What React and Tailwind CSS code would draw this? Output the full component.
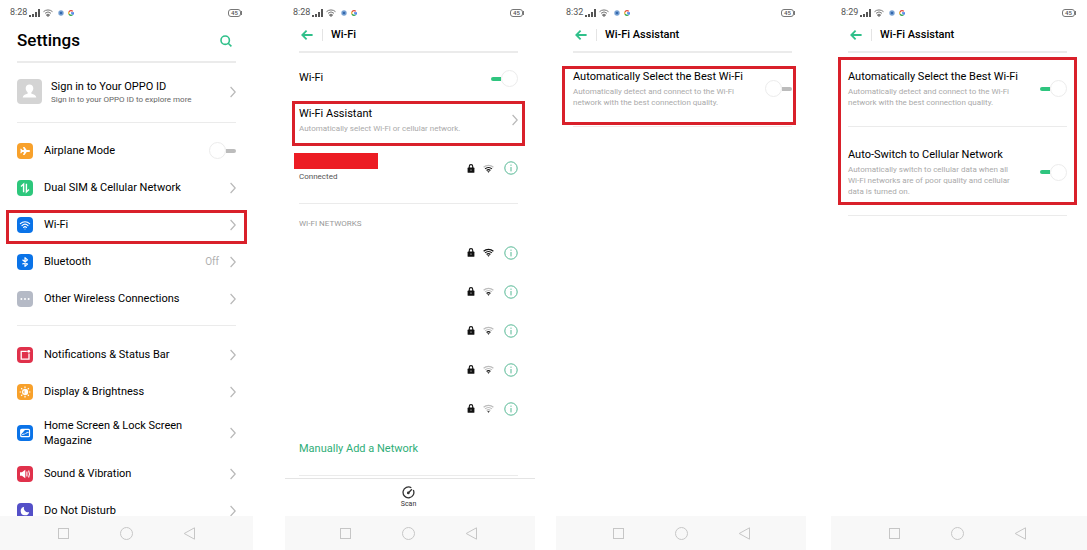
import React from 'react';

const TOP_SETTINGS = [
  { label: 'Airplane Mode', icon: 'plane', color: 'bg-[#f8a12b]', toggle: true },
  { label: 'Dual SIM & Cellular Network', icon: 'sim', color: 'bg-[#2dc77c]' },
  { label: 'Wi-Fi', icon: 'wifi', color: 'bg-[#0a73e8]', marked: true },
  { label: 'Bluetooth', icon: 'bluetooth', color: 'bg-[#0a73e8]', value: 'Off' },
  { label: 'Other Wireless Connections', icon: 'dots', color: 'bg-[#b5bac6]' },
];

const MORE_SETTINGS = [
  { label: 'Notifications & Status Bar', icon: 'notify', color: 'bg-[#e0314b]' },
  { label: 'Display & Brightness', icon: 'sun', color: 'bg-[#f8a12b]' },
  { label: 'Home Screen & Lock Screen Magazine', icon: 'picture', color: 'bg-[#0a73e8]', tall: true },
  { label: 'Sound & Vibration', icon: 'sound', color: 'bg-[#e0314b]' },
  { label: 'Do Not Disturb', icon: 'moon', color: 'bg-[#5450c8]' },
];

// signal level of each network in the list, 4 is full
const NETWORKS = [4, 2, 2, 2, 1];

const GLYPHS = {
  plane: <path d="M13 8c0 .7-.6 1-1.2 1H9.700l-2.200 3H6l1-3H5.200l-.9 1.200h-1L3.700 8l-.4-2.200h1L5.200 7H7L6 4h1.500l2.200 3h2.100c.6 0 1.200.3 1.200 1z" fill="#fff" />,
  sim: (
    <g fill="none" stroke="#fff" strokeWidth="1.4">
      <path d="M4 6.4 6.6 4v8.200M9.400 3.800V12L12 9.600" />
    </g>
  ),
  wifi: (
    <g fill="none" stroke="#fff" strokeWidth="1.2" strokeLinecap="round">
      <path d="M3.4 6.6a6.7 6.7 0 0 1 9.2 0M5 8.6a4.4 4.4 0 0 1 6 0M6.6 10.4a2 2 0 0 1 2.8 0" />
      <circle cx="8" cy="12" r=".5" fill="#fff" stroke="none" />
    </g>
  ),
  bluetooth: <path d="m5.5 5.8 5 4.3L8 12.3V3.7l2.5 2.2-5 4.3" fill="none" stroke="#fff" strokeWidth="1.2" strokeLinejoin="round" />,
  dots: (
    <g fill="#fff">
      <circle cx="4.4" cy="8" r="1" />
      <circle cx="8" cy="8" r="1" />
      <circle cx="11.6" cy="8" r="1" />
    </g>
  ),
  notify: (
    <g>
      <path d="M9.8 4.4H4.2v7.8h7.8V6.4" fill="none" stroke="#fff" strokeWidth="1.3" />
      <circle cx="11.7" cy="4.3" r="1.4" fill="#fff" />
    </g>
  ),
  sun: (
    <g stroke="#fff" strokeWidth="1.2" fill="none">
      <circle cx="8" cy="8" r="2.4" />
      <path d="M8 5.6a2.4 2.4 0 0 1 0 4.8z" fill="#fff" />
      <path d="M8 2.6v1.6M8 11.8v1.6M2.6 8h1.6M11.8 8h1.6M4.2 4.2l1.1 1.1M10.7 10.7l1.1 1.1M4.2 11.8l1.1-1.1M10.7 5.3l1.1-1.1" />
    </g>
  ),
  picture: (
    <g>
      <rect x="3.7" y="4.3" width="8.8" height="7.4" rx="1" fill="none" stroke="#fff" strokeWidth="1.2" />
      <path d="M4 4.5h4L4.6 8.4H4zM4.8 10.2c1.6-2.4 2.6-.4 3.9-1.8 1-1 1.9-1.3 3-.9" fill="#fff" stroke="#fff" strokeWidth=".6" />
    </g>
  ),
  sound: (
    <g>
      <path d="M3 6.3h1.9L8.3 3.8v8.4L4.9 9.7H3z" fill="#fff" />
      <path d="M9.9 5.6v4.8M11.6 4.6c1 2 1 4.8 0 6.8" fill="none" stroke="#fff" strokeWidth="1.1" />
    </g>
  ),
  moon: <path d="M7.2 3.8a3.9 3.9 0 0 0 5 5.1 4.3 4.3 0 1 1-5-5.1z" fill="#fff" />,
};

function Chevron() {
  return (
    <svg className="h-3 w-[6px] shrink-0" viewBox="0 0 6 12" fill="none" stroke="#b8b8b8" strokeWidth="1.2">
      <path d="m.6 1 4.6 5-4.6 5" />
    </svg>
  );
}

function WifiSignal({ level, className }) {
  const tone = (n) => (level >= n ? '#111' : '#bdbdbd');
  return (
    <svg className={className} viewBox="0 0 11 9" fill="none" strokeWidth="1.2">
      <path d="M.6 3.2a7.2 7.2 0 0 1 9.8 0" stroke={tone(4)} />
      <path d="M2.1 4.9a4.9 4.9 0 0 1 6.8 0" stroke={tone(3)} />
      <path d="M3.6 6.5a2.8 2.8 0 0 1 3.8 0" stroke={tone(2)} />
      <path d="M4.2 7.2h2.6L5.5 8.7z" fill={tone(1)} />
    </svg>
  );
}

function Toggle({ label, on }) {
  return (
    <input
      type="checkbox"
      aria-label={label}
      defaultChecked={on}
      className="flex h-[17px] w-[27px] shrink-0 appearance-none flex-row-reverse items-center before:h-1 before:w-[10px] before:rounded-r-sm before:bg-[#bcbcbc] after:size-[17px] after:rounded-full after:border after:border-[#ececec] after:bg-white checked:flex-row checked:before:rounded-l-sm checked:before:rounded-r-none checked:before:bg-[#2fc57f]"
    />
  );
}

function Marker({ className }) {
  return <span className={`pointer-events-none absolute border-3 border-[#d9202a] ${className}`} />;
}

function StatusBar({ time, inset }) {
  return (
    <div className={`flex h-[26px] items-center pr-[11px] text-[9px] text-[#555] ${inset}`}>
      <span>{time}</span>
      <svg className="ml-[2px] h-2 w-[11px]" viewBox="0 0 11 8" fill="#555">
        <path d="M0 6h2v2H0zM3 5h2v3H3zM6 3h2v5H6zM9 0h2v8H9z" />
      </svg>
      <svg className="ml-[3px] h-2 w-[10px]" viewBox="0 0 10 8" fill="none" stroke="#777" strokeWidth="1">
        <path d="M.5 2.7a6.6 6.6 0 0 1 9 0M2 4.3a4.4 4.4 0 0 1 6 0" />
        <path d="M3.4 5.9a2.3 2.3 0 0 1 3.2 0L5 7.6z" fill="#777" />
      </svg>
      <svg className="ml-[5px] size-[6px]" viewBox="0 0 6 6">
        <circle cx="3" cy="3" r="2.7" fill="#7aa3d4" />
        <circle cx="3" cy="3" r="1.3" fill="#3568ad" />
      </svg>
      <svg className="ml-1 size-[6px]" viewBox="0 0 12 12" fill="none" strokeWidth="2.6">
        <path d="M9.6 2.8A4.8 4.8 0 0 0 2 3.7" stroke="#e0493b" />
        <path d="M2 3.7a4.8 4.8 0 0 0 0 4.6" stroke="#e8b23a" />
        <path d="M2 8.3a4.8 4.8 0 0 0 7 1.3" stroke="#3aa757" />
        <path d="M9 9.6A4.6 4.6 0 0 0 10.8 6H6" stroke="#4a80e8" />
      </svg>
      <span className="ml-auto flex items-center">
        <span className="flex h-2 w-[13px] items-center justify-center rounded-[3px] border border-[#777] text-[6px] leading-[6px] font-medium">45</span>
        <span className="h-1 w-px bg-[#777]" />
      </span>
    </div>
  );
}

function TitleBar({ title }) {
  return (
    <header className="flex h-[27px] items-center border-b-2 border-[#ebebeb] pb-[7px]">
      <button aria-label="Back" className="ml-[2px]">
        <svg className="h-[10px] w-3" viewBox="0 0 12 10" fill="none" stroke="#2fc08a" strokeWidth="1.8">
          <path d="M11.6 5H1.4M5.6.7 1.3 5l4.3 4.3" />
        </svg>
      </button>
      <span className="ml-[9px] h-3 w-px bg-[#e4e4e4]" />
      <h2 className="ml-2 text-[11px] font-medium">{title}</h2>
    </header>
  );
}

function NavBar({ className = '' }) {
  return (
    <nav className={`mt-auto flex h-[34px] shrink-0 items-center justify-center gap-[50px] bg-[#f8f8f8] ${className}`}>
      <button aria-label="Recent apps">
        <svg className="size-[13px]" viewBox="0 0 13 13" fill="none" stroke="#c6c6c6">
          <rect x="1.5" y="1.5" width="10" height="10" />
        </svg>
      </button>
      <button aria-label="Home">
        <svg className="size-[13px]" viewBox="0 0 13 13" fill="none" stroke="#c6c6c6">
          <circle cx="6.5" cy="6.5" r="6" />
        </svg>
      </button>
      <button aria-label="Back">
        <svg className="size-[13px]" viewBox="0 0 13 13" fill="none" stroke="#c6c6c6">
          <path d="M11.5.8v11.4L1.2 6.5z" />
        </svg>
      </button>
    </nav>
  );
}

function SettingRow({ item }) {
  const Row = item.toggle ? 'label' : 'button';
  return (
    <Row className={`relative flex w-full shrink-0 items-center text-left ${item.tall ? 'h-[45px]' : 'h-[37px]'}`}>
      <span className={`flex size-4 shrink-0 items-center justify-center rounded-[4px] ${item.color}`}>
        <svg className="size-4" viewBox="0 0 16 16">{GLYPHS[item.icon]}</svg>
      </span>
      <span className="ml-[11px] flex-1 pr-8 text-[11px] leading-[15px]">{item.label}</span>
      {item.value && <span className="mr-[11px] text-[10px] leading-[15px] text-[#b0b0b0]">{item.value}</span>}
      {item.toggle ? <Toggle label={item.label} /> : <Chevron />}
      {item.marked && <Marker className="-inset-x-[11px] top-1 -bottom-px" />}
    </Row>
  );
}

function NetworkIcons({ level }) {
  return (
    <span className="ml-auto flex items-center">
      <svg className="h-[9px] w-2" viewBox="0 0 8 9">
        <rect x=".6" y="3.6" width="6.8" height="5.2" rx=".6" fill="#111" />
        <path d="M2.3 4V2.3a1.7 1.7 0 0 1 3.4 0V4" fill="none" stroke="#111" strokeWidth="1.1" />
        <circle cx="4" cy="6" r=".6" fill="#fff" />
      </svg>
      <WifiSignal level={level} className="ml-2 h-[9px] w-[11px]" />
      <button aria-label="Network details" className="ml-[10px]">
        <svg className="size-[14px]" viewBox="0 0 14 14" fill="none" stroke="#55b894">
          <circle cx="7" cy="7" r="6.2" />
          <path d="M7 6v4.4M7 3.6v1.2" />
        </svg>
      </button>
    </span>
  );
}

function SwitchOption({ title, text, on }) {
  return (
    <label className="flex items-center justify-between">
      <span>
        <span className="block text-[11px] leading-[15px]">{title}</span>
        <span className="mt-[2px] block w-[172px] text-[8px] leading-[11px] text-[#aaa]">{text}</span>
      </span>
      <Toggle label={title} on={on} />
    </label>
  );
}

const BEST_WIFI_TEXT = 'Automatically detect and connect to the Wi-Fi network with the best connection quality.';

export default function App() {
  return (
    <div className="flex h-screen overflow-hidden bg-white font-['Roboto',sans-serif] text-black">
      {/* Settings */}
      <section className="flex min-w-0 flex-[253] flex-col">
        <StatusBar time="8:28" inset="pl-[10px]" />
        <div className="flex min-h-0 flex-1 flex-col overflow-hidden">
          <div className="px-[17px]">
            <header className="flex h-[37px] items-center justify-between border-b-2 border-[#ebebeb] pr-1 pb-[5px]">
              <h1 className="text-[17px] font-medium">Settings</h1>
              <button aria-label="Search">
                <svg className="size-3" viewBox="0 0 12 12" fill="none" stroke="#2fc08a" strokeWidth="1.6">
                  <circle cx="5.2" cy="5.2" r="4.2" />
                  <path d="m8.2 8.2 3.2 3.2" />
                </svg>
              </button>
            </header>
            <button className="flex h-[59px] w-full items-center pb-[2px] text-left">
              <span className="flex size-[25px] items-center justify-center rounded-[4px] bg-[#d4d4d4]">
                <svg className="size-[17px]" viewBox="0 0 17 17" fill="#fff">
                  <path d="M8.5 1.5c2.3 0 3.8 1.6 3.8 3.8 0 1.7-.8 3-1.9 3.900v1.500c2.600.5 4.600 1.300 4.900 3.800H1.700c.3-2.500 2.300-3.300 4.900-3.800V9.200C5.500 8.300 4.700 7 4.700 5.300c0-2.200 1.500-3.800 3.800-3.800z" />
                </svg>
              </span>
              <span className="ml-[9px] flex-1">
                <span className="block text-[11px] leading-[15px]">Sign in to Your OPPO ID</span>
                <span className="block text-[8px] leading-[11px] text-[#666]">Sign in to your OPPO ID to explore more</span>
              </span>
              <Chevron />
            </button>
            <div className="border-y border-[#ebebeb] pt-[9px] pb-2">
              {TOP_SETTINGS.map((item) => (
                <SettingRow key={item.label} item={item} />
              ))}
            </div>
            <div className="pt-[10px]">
              {MORE_SETTINGS.map((item) => (
                <SettingRow key={item.label} item={item} />
              ))}
            </div>
          </div>
        </div>
        <NavBar />
      </section>

      {/* Wi-Fi */}
      <section className="ml-8 flex min-w-0 flex-[250] flex-col">
        <StatusBar time="8:28" inset="pl-2" />
        <div className="pr-[17px] pl-[14px]">
          <TitleBar title="Wi-Fi" />
          <label className="flex h-[51px] items-center justify-between text-[11px]">
            Wi-Fi
            <Toggle label="Wi-Fi" on />
          </label>
          <button className="relative flex h-[32px] w-full items-center justify-between text-left">
            <span>
              <span className="block text-[11px] leading-[15px]">Wi-Fi Assistant</span>
              <span className="mt-[2px] block text-[8px] leading-[11px] text-[#aaa]">Automatically select Wi-Fi or cellular network.</span>
            </span>
            <Chevron />
            <Marker className="-inset-x-[7px] -top-[3px] -bottom-[10px]" />
          </button>
          <div className="flex h-[68px] items-center border-b border-[#ebebeb] pb-[3px]">
            <div className="-ml-[5px]">
              <div className="h-4 w-[84px] bg-[#ec1c24]" />
              <p className="pl-[5px] text-[8px] leading-[15px] text-[#555]">Connected</p>
            </div>
            <NetworkIcons level={3} />
          </div>
          <h3 className="flex h-[39px] items-center text-[8px] text-[#999]">WI-FI NETWORKS</h3>
          <ul className="-mt-[10px]">
            {NETWORKS.map((level, i) => (
              <li key={i} className="flex h-[39px] items-center">
                <NetworkIcons level={level} />
              </li>
            ))}
          </ul>
          <div className="flex h-12 items-center border-b border-[#ebebeb] pb-1">
            <button className="text-[11px] text-[#2fae78]">Manually Add a Network</button>
          </div>
        </div>
        <button className="mt-auto flex h-[38px] flex-col items-center justify-center border-t border-[#e4e4e4] pr-[3px] text-[7px] leading-[11px] text-[#333]">
          <svg className="size-[13px]" viewBox="0 0 13 13" fill="none" stroke="#333" strokeWidth="1.3">
            <path d="M9.3 1.8a5.4 5.4 0 1 0 2 2.2" />
            <path d="m6.5 6.8 3.4-3.5" />
            <circle cx="6.3" cy="6.9" r=".7" fill="#333" />
          </svg>
          Scan
        </button>
        <div className="flex shrink-0 flex-col">
          <NavBar className="pr-[3px]" />
        </div>
      </section>

      {/* Wi-Fi Assistant, switched off */}
      <section className="ml-[21px] flex min-w-0 flex-[250] flex-col">
        <StatusBar time="8:32" inset="pl-[10px]" />
        <div className="pr-[14px] pl-[17px]">
          <TitleBar title="Wi-Fi Assistant" />
          <div className="relative border-b border-[#f8e6e6] pt-4 pb-[18px]">
            <SwitchOption title="Automatically Select the Best Wi-Fi" text={BEST_WIFI_TEXT} />
            <Marker className="-right-1 -left-[11px] top-[13px] bottom-px" />
          </div>
        </div>
        <NavBar />
      </section>

      {/* Wi-Fi Assistant, switched on */}
      <section className="ml-[25px] flex min-w-0 flex-[256] flex-col">
        <StatusBar time="8:29" inset="pl-[10px]" />
        <div className="pr-5 pl-[17px]">
          <TitleBar title="Wi-Fi Assistant" />
          <div className="relative border-b border-[#ebebeb] pt-4 pb-[18px]">
            <div className="border-b border-[#ebebeb] pb-[18px]">
              <SwitchOption title="Automatically Select the Best Wi-Fi" text={BEST_WIFI_TEXT} on />
            </div>
            <div className="pt-5">
              <SwitchOption
                title="Auto-Switch to Cellular Network"
                text="Automatically switch to cellular data when all Wi-Fi networks are of poor quality and cellular data is turned on."
                on
              />
            </div>
            <Marker className="-inset-x-[10px] top-1 bottom-[10px]" />
          </div>
        </div>
        <NavBar className="pr-1" />
      </section>
    </div>
  );
}
